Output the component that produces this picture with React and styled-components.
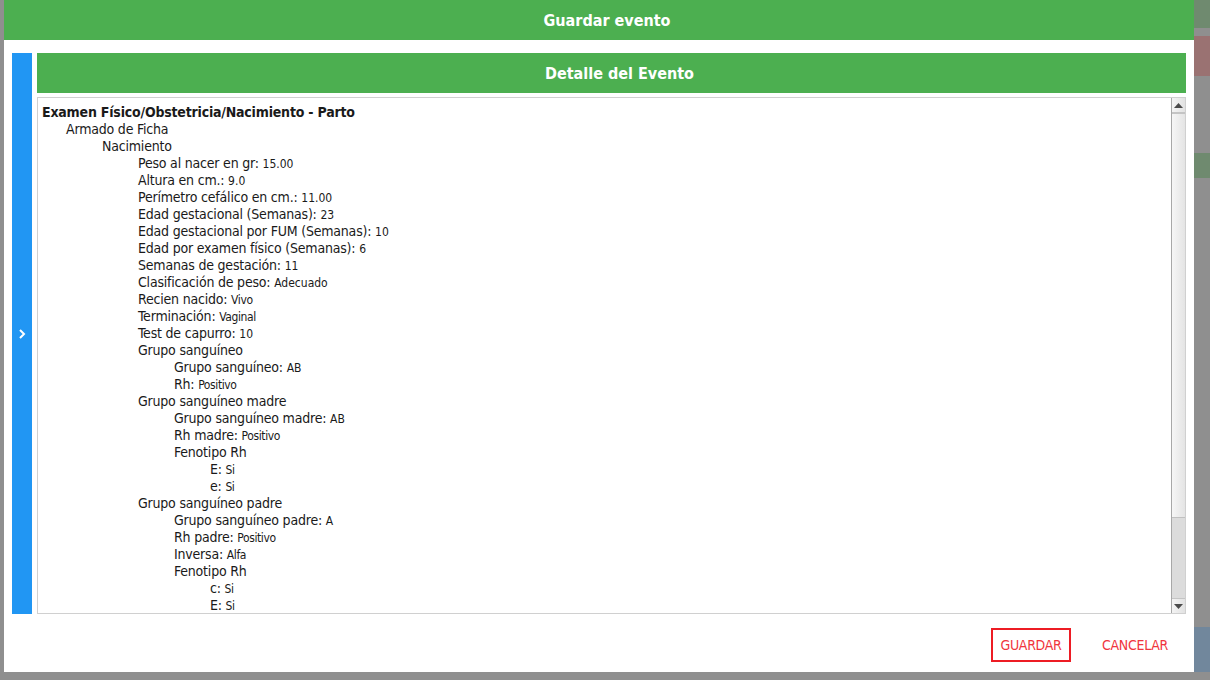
import React from "react";
import styled, { createGlobalStyle } from "styled-components";

const Global = createGlobalStyle`
  html, body { margin: 0; padding: 0; }
  body {
    background: #8f8f8f;
    width: 1210px;
    height: 680px;
    overflow: hidden;
    font-family: "DejaVu Sans Condensed", "DejaVu Sans", sans-serif;
  }
`;

const Page = styled.div`
  position: relative;
  width: 1210px;
  height: 680px;
  background: #8f8f8f;
`;

const Ghost = styled.div`
  position: absolute;
  right: 0;
  width: 16px;
  top: ${(p) => p.$top}px;
  height: ${(p) => p.$h}px;
  background: ${(p) => p.$bg};
`;

const Modal = styled.div`
  position: absolute;
  left: 4px;
  top: 0;
  width: 1190px;
  height: 672px;
  background: #fff;
  display: flex;
  flex-direction: column;
`;

const Header = styled.div`
  height: 40px;
  padding-left: 16px;
  background: #4caf50;
  color: #fff;
  font-family: "DejaVu Sans Condensed", "DejaVu Sans", sans-serif;
  font-weight: bold;
  font-size: 16px;
  display: flex;
  align-items: center;
  justify-content: center;
`;

const Body = styled.div`
  display: flex;
  gap: 5px;
  padding: 13px 8px 0 8px;
  height: 561px;
`;

const SideTab = styled.div`
  width: 20px;
  background: #2196f3;
  display: flex;
  align-items: center;
  justify-content: center;
`;

const Main = styled.div`
  flex: 1;
  display: flex;
  flex-direction: column;
  gap: 4px;
  min-width: 0;
`;

const SubHeader = styled(Header)``;

const Box = styled.div`
  flex: 1;
  border: 1px solid #d0d0d0;
  display: flex;
  min-height: 0;
`;

const Content = styled.div`
  flex: 1;
  overflow: hidden;
  padding: 6px 0 0 4px;
  color: #1a1a1a;
`;

const Row = styled.div`
  height: 17px;
  line-height: 17px;
  padding-left: ${(p) => p.$indent}px;
  font-size: 14px;
  letter-spacing: -0.2px;
  font-weight: ${(p) => (p.$bold ? "bold" : "normal")};
  white-space: nowrap;
`;

const Value = styled.span`
  font-size: 12px;
  letter-spacing: ${(p) => (p.$narrow ? "-0.4px" : "0")};
`;

const Scrollbar = styled.div`
  width: 13px;
  border-left: 1px solid #a8a8a8;
  background: #dcdcdc;
  display: flex;
  flex-direction: column;
`;

const ScrollBtn = styled.div`
  height: 14px;
  background: linear-gradient(to right, #f4f4f4, #e2e2e2);
  border-bottom: ${(p) => (p.$top ? "2px solid #c4c4c4" : "none")};
  border-top: ${(p) => (p.$top ? "none" : "1px solid #c4c4c4")};
  display: flex;
  align-items: center;
  justify-content: center;
`;

const Thumb = styled.div`
  height: 403px;
  background: linear-gradient(to right, #f6f6f6, #e4e4e4);
  border-bottom: 1px solid #c0c0c0;
`;

const Track = styled.div`
  flex: 1;
`;

const Footer = styled.div`
  flex: 1;
  display: flex;
  justify-content: flex-end;
  align-items: flex-start;
  gap: 24px;
  padding: 14px 19px 0 0;
`;

const Button = styled.button`
  width: 80px;
  height: 34px;
  background: #fff;
  border: 2px solid ${(p) => (p.$outlined ? "#ed1c24" : "transparent")};
  color: #f0353d;
  font-family: "DejaVu Sans Condensed", "DejaVu Sans", sans-serif;
  font-size: 14px;
  letter-spacing: -0.3px;
  text-transform: uppercase;
  padding: 0;
  cursor: pointer;
`;

const rows = [
  [0, "Examen Físico/Obstetricia/Nacimiento - Parto", null, true],
  [1, "Armado de Ficha"],
  [2, "Nacimiento"],
  [3, "Peso al nacer en gr: ", "15.00"],
  [3, "Altura en cm.: ", "9.0"],
  [3, "Perímetro cefálico en cm.: ", "11.00"],
  [3, "Edad gestacional (Semanas): ", "23"],
  [3, "Edad gestacional por FUM (Semanas): ", "10"],
  [3, "Edad por examen físico (Semanas): ", "6"],
  [3, "Semanas de gestación: ", "11"],
  [3, "Clasificación de peso: ", "Adecuado"],
  [3, "Recien nacido: ", "Vivo", false, true],
  [3, "Terminación: ", "Vaginal", false, true],
  [3, "Test de capurro: ", "10"],
  [3, "Grupo sanguíneo"],
  [4, "Grupo sanguíneo: ", "AB"],
  [4, "Rh: ", "Positivo", false, true],
  [3, "Grupo sanguíneo madre"],
  [4, "Grupo sanguíneo madre: ", "AB"],
  [4, "Rh madre: ", "Positivo", false, true],
  [4, "Fenotipo Rh"],
  [5, "E: ", "Si", false, true],
  [5, "e: ", "Si", false, true],
  [3, "Grupo sanguíneo padre"],
  [4, "Grupo sanguíneo padre: ", "A"],
  [4, "Rh padre: ", "Positivo", false, true],
  [4, "Inversa: ", "Alfa", false, true],
  [4, "Fenotipo Rh"],
  [5, "c: ", "Si", false, true],
  [5, "E: ", "Si", false, true],
];

const indents = [0, 24, 60, 96, 132, 168];

export default function App() {
  return (
    <Page>
      <Global />
      <Ghost $top={0} $h={28} $bg="#6f8a6f" />
      <Ghost $top={36} $h={40} $bg="#9a7272" />
      <Ghost $top={153} $h={25} $bg="#6f8a6f" />
      <Ghost $top={627} $h={45} $bg="#71879c" />
      <Modal>
        <Header>Guardar evento</Header>
        <Body>
          <SideTab>
            <svg width="8" height="12" viewBox="0 0 8 12">
              <path d="M2 2 L6 6 L2 10" stroke="#fff" strokeWidth="2" fill="none" />
            </svg>
          </SideTab>
          <Main>
            <SubHeader>Detalle del Evento</SubHeader>
            <Box>
              <Content>
                {rows.map(([lvl, label, value, bold, narrow], i) => (
                  <Row key={i} $indent={indents[lvl]} $bold={bold}>
                    {label}
                    {value && <Value $narrow={narrow}>{value}</Value>}
                  </Row>
                ))}
              </Content>
              <Scrollbar>
                <ScrollBtn $top>
                  <svg width="9" height="5" viewBox="0 0 9 5">
                    <path d="M0 5 L4.5 0 L9 5 Z" fill="#4a4a4a" />
                  </svg>
                </ScrollBtn>
                <Thumb />
                <Track />
                <ScrollBtn>
                  <svg width="9" height="5" viewBox="0 0 9 5">
                    <path d="M0 0 L4.5 5 L9 0 Z" fill="#4a4a4a" />
                  </svg>
                </ScrollBtn>
              </Scrollbar>
            </Box>
          </Main>
        </Body>
        <Footer>
          <Button $outlined>Guardar</Button>
          <Button>Cancelar</Button>
        </Footer>
      </Modal>
    </Page>
  );
}
